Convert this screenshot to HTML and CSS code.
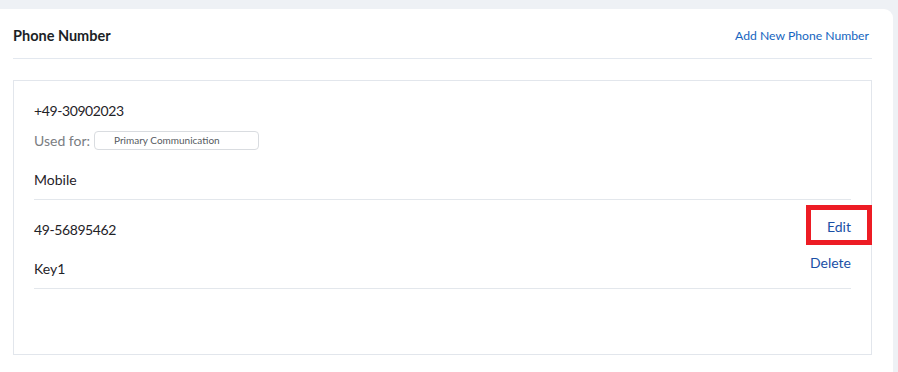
FILE: index.html
```html
<!DOCTYPE html>
<html lang="en">
  <head>
    <meta charset="UTF-8" />
    <meta name="viewport" content="width=device-width, initial-scale=1.0" />
    <title>Phone Number</title>
    <link rel="stylesheet" href="styles.css">
  </head>
  <body>
    <div class="card">
      <div class="card-header">
        <h2>Phone Number</h2>
        <a href="#" class="add-link">Add New Phone Number</a>
      </div>

      <div class="phone-box">
        <div class="phone-item">
          <div class="phone-info">
            <div class="phone-number">+49-30902023</div>
            <div class="used-for">
              <span class="used-label">Used for:</span>
              <span class="badge">Primary Communication</span>
            </div>
            <div class="phone-type">Mobile</div>
          </div>
        </div>

        <div class="phone-item">
          <div class="phone-info">
            <div class="phone-number">49-56895462</div>
            <div class="phone-type">Key1</div>
          </div>
          <div class="actions">
            <div class="edit-wrap">
              <a href="#" class="action-link">Edit</a>
              <span class="highlight"></span>
            </div>
            <a href="#" class="action-link">Delete</a>
          </div>
        </div>
      </div>
    </div>
  </body>
</html>
```

FILE: styles.css
```css
body {
  font-family: Lato, "Open Sans", sans-serif;
  margin: 0;
  padding: 0;
  background-color: #eef1f5;
  color: #1f2328;
}

.card {
  margin-top: 9px;
  width: 893px;
  height: 363px;
  box-sizing: border-box;
  padding: 0 21px 0 13px;
  background-color: white;
  border-top-right-radius: 9px;
}

.card-header {
  display: flex;
  justify-content: space-between;
  align-items: center;
  height: 50px;
  box-sizing: border-box;
  padding: 4px 3px 0 0;
  border-bottom: 1px solid #e3e8ef;
}

.card-header h2 {
  margin: 0;
  font-size: 14.5px;
  font-weight: bold;
  color: #1c1f26;
}

.add-link {
  text-decoration: none;
  color: #1565c0;
  font-size: 12.2px;
}

.phone-box {
  margin-top: 21px;
  height: 275px;
  box-sizing: border-box;
  border: 1px solid #e2e6ec;
  padding: 0 20px;
}

.phone-item {
  display: flex;
  justify-content: space-between;
  border-bottom: 1px solid #e3e7ec;
}

.phone-info {
  display: flex;
  flex-direction: column;
  font-size: 14px;
  padding: 20px 0 9px;
}

.phone-number {
  line-height: 20px;
  letter-spacing: -0.4px;
}

.used-for {
  display: flex;
  align-items: center;
  gap: 4px;
  margin-top: 9px;
  height: 20px;
}

.used-label {
  color: #7a7d82;
}

.badge {
  width: 144px;
  height: 17px;
  line-height: 17px;
  border: 1px solid #d9dce0;
  border-radius: 4px;
  padding-left: 19px;
  font-size: 10px;
  color: #555a60;
}

.phone-type {
  margin-top: 20px;
  line-height: 20px;
}

.phone-number + .phone-type {
  margin-top: 19px;
}

.actions {
  display: flex;
  flex-direction: column;
  align-items: flex-end;
  padding-top: 16px;
  gap: 16px;
}

.edit-wrap {
  position: relative;
}

.action-link {
  text-decoration: none;
  color: #1a4fa6;
  font-size: 14px;
  line-height: 20px;
}

.highlight {
  position: absolute;
  left: -21px;
  top: -11px;
  width: 56px;
  height: 30px;
  border: 5px solid #ed1c24;
}
```
